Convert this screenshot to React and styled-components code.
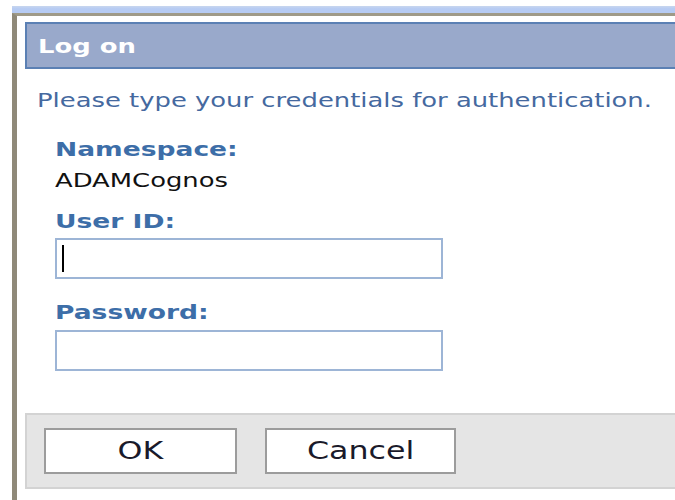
import React from 'react';
import styled, { createGlobalStyle, css } from 'styled-components';

const GlobalStyle = createGlobalStyle`
  html, body {
    margin: 0;
    padding: 0;
    background: #ffffff;
    overflow: hidden;
  }
  body {
    font-family: 'DejaVu Sans', Verdana, sans-serif;
  }
`;

const wide = css`
  display: inline-block;
  white-space: nowrap;
  transform: scaleX(1.36);
  transform-origin: left center;
`;

const Page = styled.div`
  width: 675px;
  height: 500px;
  padding: 6px 0 0 12px;
  box-sizing: border-box;
  display: flex;
  flex-direction: column;
`;

const PortalStrip = styled.div`
  height: 7px;
  background: linear-gradient(to bottom, #c8d6ee 0%, #b6cbf3 40%, #b6cbf3 100%);
  flex-shrink: 0;
`;

const Frame = styled.div`
  flex: 1;
  border-top: 3px solid #9f9a88;
  border-left: 5px solid #8f8979;
  padding: 6px 0 0 8px;
  display: flex;
  flex-direction: column;
  min-height: 0;
`;

const TitleBar = styled.div`
  height: 43px;
  background: #99a9cb;
  border: 2px solid #5b80b4;
  border-right: none;
  display: flex;
  align-items: center;
  padding-left: 11px;
  flex-shrink: 0;
`;

const Title = styled.span`
  ${wide};
  color: #ffffff;
  font-weight: bold;
  font-size: 19px;
`;

const Body = styled.div`
  display: flex;
  flex-direction: column;
  padding-left: 12px;
`;

const Instructions = styled.p`
  margin: 19px 0 0;
  line-height: 24px;
  height: 24px;
  font-size: 19px;
  color: #45699f;
  span {
    ${wide};
  }
`;

const Fields = styled.div`
  display: flex;
  flex-direction: column;
  align-items: flex-start;
  padding-left: 18px;
  margin-top: 26px;
`;

const Label = styled.div`
  ${wide};
  line-height: 24px;
  font-size: 19.5px;
  font-weight: bold;
  color: #3d6ea8;
  margin-top: ${(p) => p.$gap || 0}px;
`;

const Value = styled.div`
  ${wide};
  line-height: 24px;
  font-size: 19px;
  color: #111111;
  margin-top: 6px;
`;

const InputBox = styled.div`
  width: 388px;
  height: 41px;
  box-sizing: border-box;
  border: 2px solid #9db5d6;
  background: #ffffff;
  margin-top: ${(p) => p.$gap || 4}px;
  display: flex;
  align-items: center;
  padding-left: 5px;
`;

const Caret = styled.span`
  width: 2px;
  height: 27px;
  background: #000000;
`;

const ButtonBar = styled.div`
  margin-top: 42px;
  height: 76px;
  box-sizing: border-box;
  background: #e5e5e5;
  border: 2px solid #d3d3d3;
  border-right: none;
  display: flex;
  align-items: center;
  gap: 28px;
  padding-left: 17px;
`;

const Button = styled.button`
  width: ${(p) => p.$w}px;
  height: 46px;
  background: #ffffff;
  border: 2px solid #9c9c9c;
  font-family: 'DejaVu Sans', Verdana, sans-serif;
  font-size: 24px;
  color: #1a1a2a;
  padding: 0;
  cursor: pointer;
  display: flex;
  align-items: center;
  justify-content: center;
  span {
    ${wide};
    transform: scaleX(1.32);
    transform-origin: center;
  }
`;

export default function App() {
  return (
    <>
      <GlobalStyle />
      <Page>
        <PortalStrip />
        <Frame>
          <TitleBar>
            <Title>Log on</Title>
          </TitleBar>
          <Body>
            <Instructions>
              <span>Please type your credentials for authentication.</span>
            </Instructions>
            <Fields>
              <Label>Namespace:</Label>
              <Value>ADAMCognos</Value>
              <Label $gap={18}>User ID:</Label>
              <InputBox>
                <Caret />
              </InputBox>
              <Label $gap={22}>Password:</Label>
              <InputBox $gap={5} />
            </Fields>
          </Body>
          <ButtonBar>
            <Button $w={193}>
              <span>OK</span>
            </Button>
            <Button $w={191}>
              <span>Cancel</span>
            </Button>
          </ButtonBar>
        </Frame>
      </Page>
    </>
  );
}
